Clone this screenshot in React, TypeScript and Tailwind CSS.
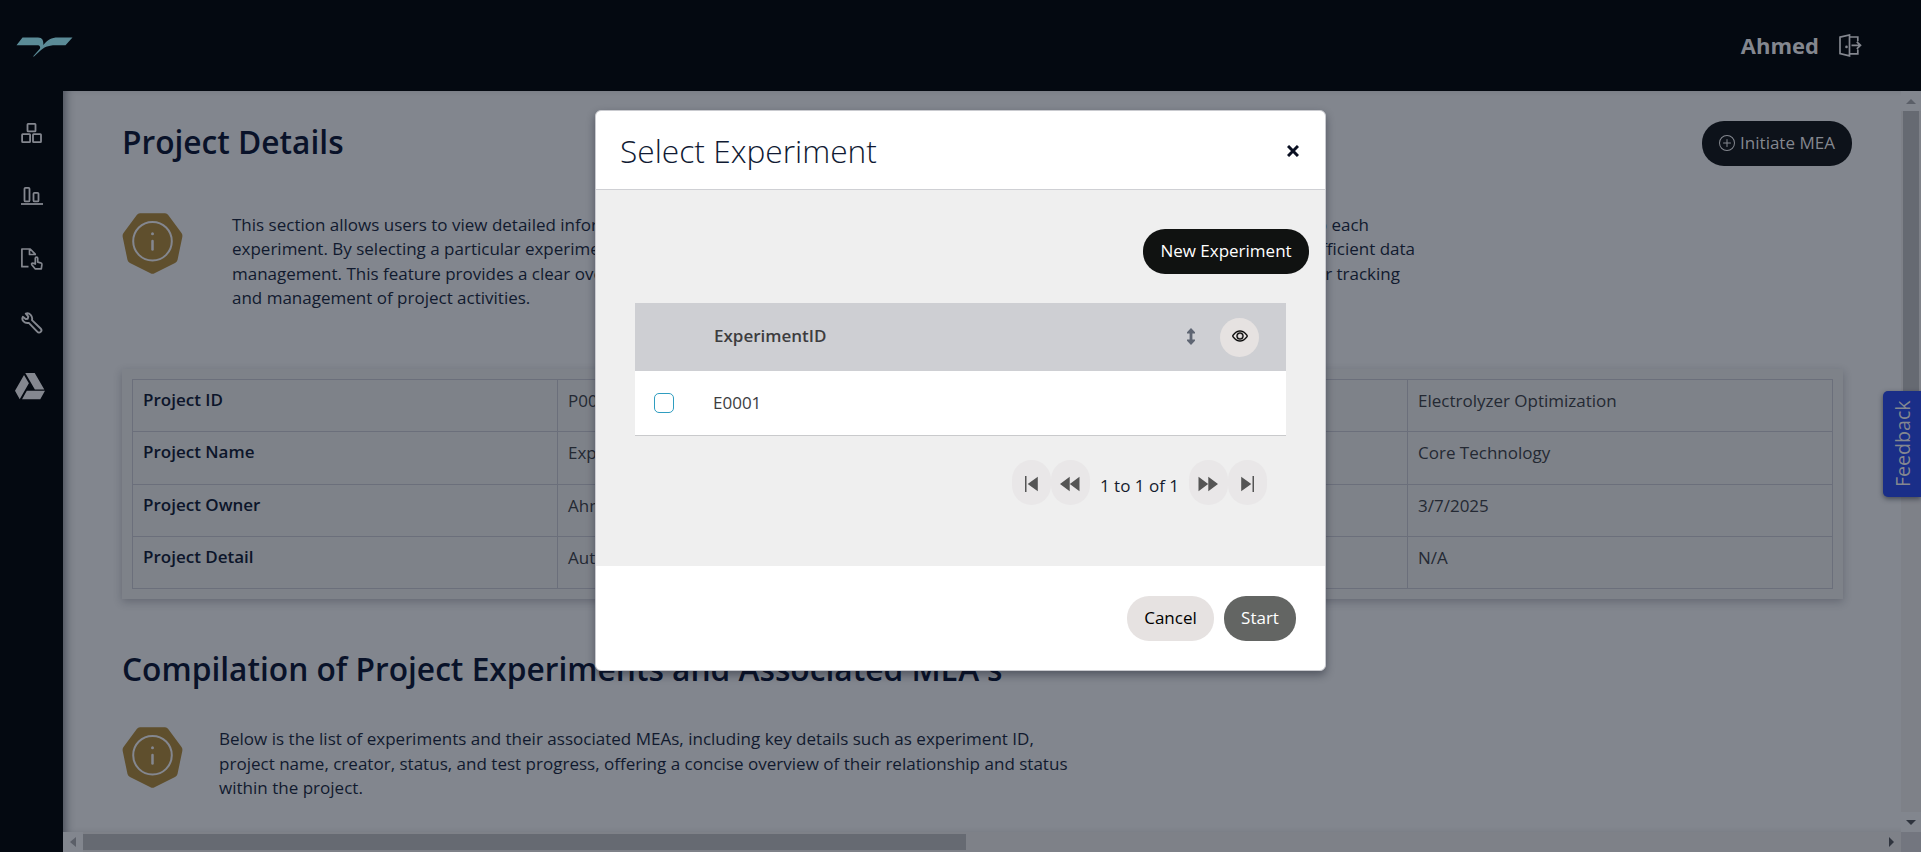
import React from "react";
import { FaGoogleDrive } from "react-icons/fa";
import { BsPlusCircle, BsEye } from "react-icons/bs";

const details = [
  ["Project ID", "P0001", "Project Type", "Electrolyzer Optimization"],
  ["Project Name", "Experiment", "Department", "Core Technology"],
  ["Project Owner", "Ahmed", "Created On", "3/7/2025"],
  ["Project Detail", "Automation", "Comments", "N/A"],
];

function Logo() {
  return (
    <svg width="57" height="20" viewBox="0 0 57 20" fill="#5b8b97">
      <path d="M6.500 0.500H22C26.500 0.500 27.500 3.500 27.400 8C32 2.500 35 0.500 42 0.500H56.500L49.500 8.200H40C31 8.200 28 10.500 24.500 13.500L18 19.500H17L24 11.500C24.500 9.500 23.500 8.200 22 8.200H0.500Z" />
    </svg>
  );
}

function BoxesIcon() {
  return (
    <svg width="22" height="22" viewBox="0 0 22 22" fill="none" stroke="#84878f" strokeWidth="1.800">
      <rect x="6.500" y="1.800" width="8" height="7.600" rx="0.600" />
      <rect x="1.100" y="12.200" width="8" height="8" rx="0.600" />
      <rect x="12" y="12.200" width="8" height="8" rx="0.600" />
    </svg>
  );
}

function BarsIcon() {
  return (
    <svg width="22" height="20" viewBox="0 0 22 20" fill="none" stroke="#84878f" strokeWidth="1.800">
      <rect x="3.500" y="1.800" width="5" height="13.600" rx="1" />
      <rect x="12.500" y="6.800" width="5" height="8.600" rx="1" />
      <path d="M0 18h22" />
    </svg>
  );
}

function FileTouchIcon() {
  return (
    <svg width="22" height="23" viewBox="0 0 22 23" fill="none" stroke="#84878f" strokeWidth="1.700" strokeLinejoin="round">
      <path d="M7.500 19.700H0.900V2H9.200L14.200 7.200V8.300M8.500 2V7.500H14" />
      <path d="M14.300 17V11.200c0-1.500 2.400-1.500 2.400 0v3.900l3 .7c1 .3 1.300 1 1.200 1.900l-.6 4.100h-6.200l-3.300-4c-.8-1.300.8-2.300 1.800-1.400z" />
    </svg>
  );
}

function WrenchIcon() {
  return (
    <svg width="22" height="22" viewBox="0 0 22 22" fill="none" stroke="#84878f" strokeWidth="1.900" strokeLinejoin="round">
      <path d="M4.800 1.600 7.300 4.700 6.700 6.700 4.700 7.100 1.800 4.800C0.200 8 3.300 11.800 7.800 10.900L16.200 19.700C17.300 20.900 18.700 20.900 19.700 19.900C20.700 18.900 20.700 17.600 19.600 16.500L11 8.100C12 3.900 8.400 0.300 4.800 1.600Z" />
    </svg>
  );
}

function ExitIcon() {
  return (
    <svg width="23" height="23" viewBox="0 0 23 23" fill="none" stroke="#84878f" strokeWidth="1.700">
      <path d="M1 3.200 10.500 1V21.800L1 19.500ZM10.500 3H18.800V7.200M10.500 19.800H18.800V15.600M12.500 11.300H21.500M17.800 7.800 21.500 11.300 17.800 14.900" />
      <circle cx="7.500" cy="12.900" r="1.300" fill="#84878f" stroke="none" />
    </svg>
  );
}

function InfoBadge() {
  return (
    <svg className="shrink-0" width="61" height="61" viewBox="0 0 61 61">
      <path
        d="M18 .2H43Q45 .2 46.200 2L59.500 20Q60.700 21.500 60.300 24L55.500 47Q55 49 53 50L32.500 60.200Q30.500 61.200 28.500 60.200L8 50Q6 49 5.500 47L.700 24Q.300 21.500 1.500 20L14.800 2Q16 .2 18 .2Z"
        fill="#5f4f2d"
      />
      <circle cx="30.500" cy="28.200" r="19.300" fill="none" stroke="#84878f" strokeWidth="2" />
      <circle cx="30.500" cy="20.700" r="1.500" fill="#84878f" />
      <path d="M30.500 28v8.500" stroke="#84878f" strokeWidth="2.500" strokeLinecap="round" />
    </svg>
  );
}

function Header() {
  return (
    <header className="flex h-[91px] shrink-0 items-center justify-between bg-[#040911] pr-[59px] pl-4">
      <div className="pt-[3px]">
        <Logo />
      </div>
      <div className="flex items-center gap-5">
        <span className="pb-px text-[22px] font-bold text-[#84878f]">Ahmed</span>
        <ExitIcon />
      </div>
    </header>
  );
}

function Sidebar() {
  return (
    <aside className="flex w-[63px] shrink-0 flex-col items-center bg-[#040911] pt-[31px]">
      <BoxesIcon />
      <div className="mt-[42px]"><BarsIcon /></div>
      <div className="mt-[41px]"><FileTouchIcon /></div>
      <div className="mt-[42px]"><WrenchIcon /></div>
      <FaGoogleDrive className="mt-[35px] -ml-[3px] h-[34px] w-[30px] text-[#84878f]" />
    </aside>
  );
}

function DetailsTable() {
  return (
    <section className="mt-[52px] w-[1721px] bg-[#7e8289] p-[10px] shadow-[0_3px_8px_rgba(20,25,40,0.25)]">
      <table className="w-[1701px] table-fixed border-collapse text-[17px]">
        <tbody>
          {details.map((row) => (
            <tr key={row[0]} className="h-[52.350px]">
              {row.map((cell, i) => (
                <td
                  key={cell}
                  className={
                    i % 2 === 0
                      ? "border border-[#6b6f7b] px-[10px] pt-[8px] align-top font-semibold leading-[24px] text-[#0c152a]"
                      : "border border-[#6b6f7b] px-[10px] pt-[9px] align-top leading-[24px] text-[#242933]"
                  }
                >
                  {cell}
                </td>
              ))}
            </tr>
          ))}
        </tbody>
      </table>
    </section>
  );
}

function Content() {
  return (
    <main className="min-h-0 flex-1 overflow-hidden bg-[#82868e] pl-[59px] shadow-[inset_8px_0_8px_-5px_rgba(10,15,30,0.45)]">
      <div className="mt-[27px] flex h-[50px] w-[1730px] items-center justify-between">
        <h1 className="-mt-[3px] text-[31.700px] font-semibold leading-[48px] text-[#091229]">Project Details</h1>
        <button className="flex h-[45px] w-[150px] items-center justify-center gap-[5px] rounded-[22px] bg-[#0d121a] text-[17px] text-[#84878f]">
          <BsPlusCircle className="size-4" />
          Initiate MEA
        </button>
      </div>
      <div className="mt-[45px] flex">
        <InfoBadge />
        <div className="ml-[49px] text-[17px] leading-[24.480px] text-[#111a2e]">
          <div className="flex w-[1137px] justify-between whitespace-nowrap">
            <span>This section allows users to view detailed information linked</span>
            <span>to each</span>
          </div>
          <div className="flex w-[1183px] justify-between whitespace-nowrap">
            <span>experiment. By selecting a particular experiment, users ensure</span>
            <span>efficient data</span>
          </div>
          <div className="flex w-[1168px] justify-between whitespace-nowrap">
            <span>management. This feature provides a clear overview</span>
            <span>for tracking</span>
          </div>
          <div>and management of project activities.</div>
        </div>
      </div>
      <div className="h-[6px]" />
      <DetailsTable />
      <h2 className="mt-[46px] whitespace-nowrap text-[31.700px] font-semibold leading-[48px] text-[#091229]">
        Compilation of Project Experiments and Associated MEA's
      </h2>
      <div className="mt-[34px] flex">
        <InfoBadge />
        <p className="ml-[36px] whitespace-nowrap text-[17.050px] leading-[24.480px] text-[#111a2e]">
          Below is the list of experiments and their associated MEAs, including key details such as experiment ID,
          <br />
          project name, creator, status, and test progress, offering a concise overview of their relationship and status
          <br />
          within the project.
        </p>
      </div>
    </main>
  );
}

function HorizontalScrollbar() {
  return (
    <div className="flex h-5 shrink-0 items-center bg-[#7e8188]">
      <div className="flex h-full w-5 items-center justify-center bg-[#82868e]">
        <svg width="6" height="10" viewBox="0 0 6 10" fill="#5b5f68"><path d="M6 0v10L0 5z" /></svg>
      </div>
      <div className="h-4 w-[883px] bg-[#666a72]" />
      <svg className="mr-[7px] ml-auto" width="5" height="10" viewBox="0 0 5 10" fill="#2f343e"><path d="M0 0v10l5-5z" /></svg>
    </div>
  );
}

function VerticalScrollbar() {
  return (
    <div className="flex w-5 shrink-0 flex-col items-center bg-[#7e8188]">
      <div className="flex h-5 w-full items-center justify-center bg-[#82868e]">
        <svg className="mt-px" width="10" height="5" viewBox="0 0 10 5" fill="#5b5f68"><path d="M0 5h10L5 0z" /></svg>
      </div>
      <div className="h-[282px] w-4 bg-[#666a72]" />
      <div className="mt-auto flex h-5 w-full items-center justify-center bg-[#82868e]">
        <svg width="10" height="5" viewBox="0 0 10 5" fill="#2f343e"><path d="M0 0h10L5 5z" /></svg>
      </div>
      <div className="h-5 w-full bg-[#73767f]" />
    </div>
  );
}

function FirstIcon() {
  return (
    <svg width="13" height="16" viewBox="0 0 13 16" fill="#555"><path d="M0 0h1.500v16H0zM12.800 .8v14.400L2.700 8z" /></svg>
  );
}

function PreviousIcon() {
  return (
    <svg width="20" height="16" viewBox="0 0 20 16" fill="#555"><path d="M9.700 .8v14.400L0 8zM19.500 .8v14.400L9.800 8z" /></svg>
  );
}

const pageButton = "flex h-[45px] w-[39px] items-center justify-center rounded-[20px] bg-[#e9e7e8] pt-[3px] pr-px";

function Pagination() {
  return (
    <div className="mt-[24px] flex justify-end pr-[19px]">
      <button className={pageButton}><FirstIcon /></button>
      <button className={pageButton}><PreviousIcon /></button>
      <span className="w-[99px] pt-[12px] text-center text-[17px] leading-[27px] text-[#151c2e]">1 to 1 of 1</span>
      <button className={pageButton}><span className="rotate-180"><PreviousIcon /></span></button>
      <button className={pageButton}><span className="rotate-180"><FirstIcon /></span></button>
    </div>
  );
}

function SelectExperimentModal() {
  return (
    <div
      role="dialog"
      className="absolute top-[110px] left-[595px] flex h-[561px] w-[731px] flex-col overflow-hidden rounded-[6px] border border-[#c9cacf] bg-white shadow-[0_4px_8px_rgba(10,15,30,0.4)]"
    >
      <div className="flex h-[79px] shrink-0 items-center justify-between border-b border-[#cfd0d4] pr-[26px] pl-6">
        <h3 className="pt-px text-[31.700px] font-light leading-[48px] text-[#101a33]">Select Experiment</h3>
        <svg className="mt-[2px]" width="12" height="12" viewBox="0 0 12 12" stroke="#0a1022" strokeWidth="3"><path d="M1 1l10 10M11 1L1 11" /></svg>
      </div>
      <div className="h-[376px] shrink-0 bg-[#efefef] pt-[39px]">
        <div className="flex justify-end pr-4">
          <button className="h-[45px] w-[166px] rounded-[22px] bg-[#101211] pb-px text-[17px] text-white">New Experiment</button>
        </div>
        <div className="mt-[29px] ml-[39px] w-[651px]">
          <div className="flex h-[68px] items-center bg-[#cecfd3] pr-[27px] pl-[79px] text-[17px]">
            <span className="flex-1 pb-[2px] font-semibold text-[#3d3d3f]">ExperimentID</span>
            <svg className="mr-[25px] mb-[2px]" width="8" height="17" viewBox="0 0 8 17" fill="#5f6673">
              <path d="M4 0l4 4.300V5.500H5.400v6H8v1.200L4 17 0 12.700v-1.200h2.600v-6H0V4.300z" />
            </svg>
            <button className="flex size-[39px] items-center justify-center rounded-full bg-[#e6e2e1]">
              <BsEye className="mb-[3px] size-4 stroke-black stroke-[0.400px] text-black" />
            </button>
          </div>
          <div className="flex h-[65px] items-center border-b border-[#c9cacc] bg-white pl-[19px]">
            <span className="size-5 rounded-[5px] border border-[#2f9dc0]" />
            <span className="ml-[39px] pb-px text-[17px] text-[#3d3d3f]">E0001</span>
          </div>
          <Pagination />
        </div>
      </div>
      <div className="flex justify-end gap-[10px] pt-[30px] pr-[29px] text-[17px]">
        <button className="h-[45px] w-[87px] rounded-[22px] bg-[#e6e2e1] pb-[2px] text-black">Cancel</button>
        <button className="h-[45px] w-[72px] rounded-[22px] bg-[#636563] pb-[2px] text-white">Start</button>
      </div>
    </div>
  );
}

export default function App() {
  return (
    <div className="relative flex h-[852px] w-[1921px] flex-col overflow-hidden font-['Open_Sans',sans-serif]">
      <Header />
      <div className="flex min-h-0 flex-1">
        <Sidebar />
        <div className="flex min-w-0 flex-1 flex-col">
          <Content />
          <HorizontalScrollbar />
        </div>
        <VerticalScrollbar />
      </div>
      <button className="absolute top-[391px] right-0 flex h-[106px] w-[38px] items-center justify-center rounded-l-[5px] bg-[#1a2e88] shadow-[0_2px_5px_rgba(10,15,30,0.5)]">
        <span className="-rotate-90 whitespace-nowrap text-[19.600px] text-[#84878f]">Feedback</span>
      </button>
      <SelectExperimentModal />
    </div>
  );
}
